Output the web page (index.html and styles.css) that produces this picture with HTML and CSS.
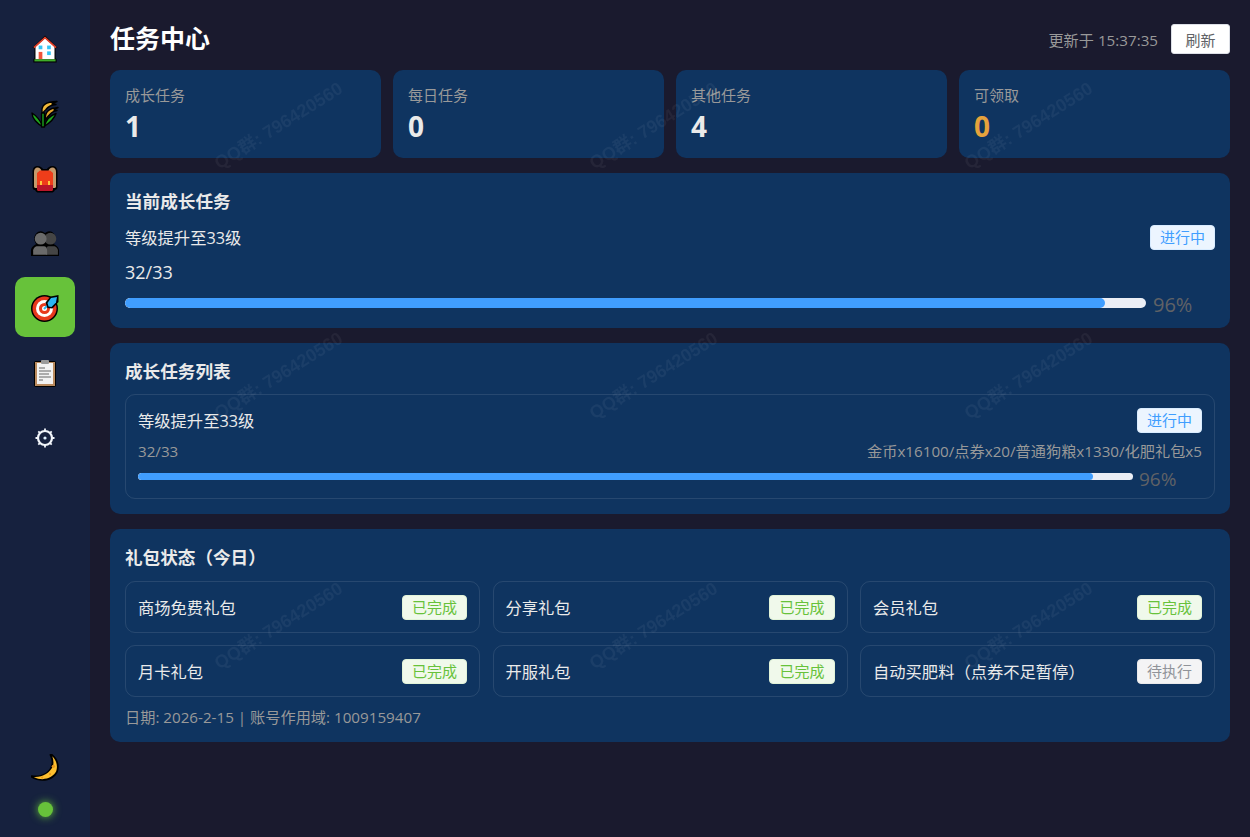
FILE: index.html
```html
<!DOCTYPE html>
<html lang="zh-CN">
<head>
    <meta charset="UTF-8">
    <meta name="viewport" content="width=device-width, initial-scale=1.0">
    <title>任务中心</title>
    <link rel="stylesheet" href="styles.css">
</head>
<body>
    <div class="app">
        <nav class="sidebar">
            <div class="nav-list">
                <a class="nav-item">
                    <svg class="nav-icon" viewBox="1 1 26 26.500">
                        <path d="M3 27v-3l1-1V13H2L14 1.500 26 13h-2v10l1 1v3z" fill="#000"/>
                        <path d="M5 24V12l9-8 9 8v12z" fill="#fff"/>
                        <path d="M3.500 13 14 3.500 24.500 13" fill="none" stroke="#e0402a" stroke-width="1.600"/>
                        <rect x="8" y="11" width="3.500" height="3.500" fill="#34c5f5"/>
                        <rect x="16" y="11" width="3.500" height="3.500" fill="#34c5f5"/>
                        <rect x="16" y="16.500" width="3.500" height="3.500" fill="#34c5f5"/>
                        <rect x="8" y="17" width="3.500" height="7" fill="#f0533a"/>
                        <rect x="4" y="24" width="20" height="2" fill="#3fae2a"/>
                    </svg>
                </a>
                <a class="nav-item">
                    <svg class="nav-icon" viewBox="0 0 28 28">
                        <g stroke="#000" stroke-width="1.400" stroke-linejoin="round">
                            <path d="M11.500 14C9 5 15 1.500 26 1.500c-3 1-4 1.500-5 2.500 1.500 0 3 0 4 .5-5 .5-8 2-10 5-2 1.500-3 3-3.500 4.500z" fill="#f3b93a"/>
                            <path d="M14.500 20C13.500 12 18 8 27 7.500c-2 1-3 1.500-4 2.500 1 0 2 0 3 .5-5 .5-8 4-11.500 9.500z" fill="#e5a52c"/>
                            <path d="M12 26.500C9 20 6 16 1 13c0 5 5 11 11 13.500z" fill="#1fa51d"/>
                            <path d="M13 26.500C17 24 23 20 25 13.500c-6 2-10 6-12 13z" fill="#1fa51d"/>
                            <path d="M10.500 27V13h3v14z" fill="#178f1a"/>
                        </g>
                    </svg>
                </a>
                <a class="nav-item">
                    <svg class="nav-icon" viewBox="0 0 28 28">
                        <path d="M1.500 22V7c0-4 2-6 5-6s5 2 5.500 3h4c.5-1 2.500-3 5.500-3s5 2 5 6v15c0 2-1 3-3.500 3H24c-1 2-2 2.500-3.500 2.500h-13C6 27.500 5 27 4 25h-.500C2.500 25 1.500 24 1.500 22z" fill="#000"/>
                        <path d="M3 22V7c0-3 1.500-4.500 3.500-4.500S10 4 10.500 5.500L7 8v15H5c-1 0-2-.5-2-1zM25 22V7c0-3-1.500-4.500-3.500-4.500S18 4 17.500 5.500L21 8v15h2c1 0 2-.5 2-1z" fill="#c49a6c"/>
                        <path d="M6 8l3-2.500h10L22 8v16c0 1-1 2-2 2H8c-1 0-2-1-2-2z" fill="#ef3d1a"/>
                        <path d="M6 20h16v4c0 1-1 2-2 2H8c-1 0-2-1-2-2z" fill="#b9162a"/>
                        <rect x="9" y="16" width="2" height="4" fill="#ffc83d"/>
                        <rect x="17" y="16" width="2" height="4" fill="#ffc83d"/>
                    </svg>
                </a>
                <a class="nav-item">
                    <svg class="nav-icon" viewBox="1 2 26 26">
                        <path d="M1 27v-5c0-3 3-5 5-6-1-1-2-3-2-5 0-4 3-7 6-7 2 0 3 1 4 2 1-1 2-2 4-2 3 0 6 3 6 7 0 2-1 4-2 5 2 1 5 3 5 6v5z" fill="#000"/>
                        <circle cx="19" cy="11" r="5.500" fill="#454545"/>
                        <circle cx="10" cy="11" r="5.500" fill="#6a6a6a"/>
                        <path d="M15 26v-4c0-2 1-4 2-4h5c2 0 4 2 4 4v4z" fill="#454545"/>
                        <path d="M3 26v-4c0-2 2-4 4-4h6c2 0 3 2 3 4v4z" fill="#6a6a6a"/>
                    </svg>
                </a>
                <a class="nav-item active">
                    <svg class="nav-icon" viewBox="0 0 28 28">
                        <circle cx="13.500" cy="14.500" r="13.500" fill="#000"/>
                        <circle cx="13.500" cy="14.500" r="12" fill="#e8391d"/>
                        <circle cx="13.500" cy="14.500" r="8.500" fill="#fff"/>
                        <circle cx="13.500" cy="14.500" r="5.500" fill="#e8391d"/>
                        <circle cx="13.500" cy="14.500" r="2.500" fill="#fff"/>
                        <path d="M13 15 20 8" stroke="#2cb5f2" stroke-width="2"/>
                        <path d="M14.500 8.500l5-6 8-1.500v7l-6 6.500-5-.500z" fill="#000"/>
                        <path d="M16.500 9l3.500-5 6-1-1 5.500-4.500 4.500-3-.500z" fill="#2cb5f2"/>
                    </svg>
                </a>
                <a class="nav-item">
                    <svg class="nav-icon" viewBox="0 0 28 28">
                        <rect x="3" y="2" width="22" height="26" rx="2" fill="#000"/>
                        <rect x="4" y="3" width="20" height="24" fill="#b98a5e"/>
                        <rect x="6" y="4" width="16" height="21" fill="#f2f2f2"/>
                        <rect x="10" y="1" width="8" height="4" rx="1" fill="#9a9a9a"/>
                        <path d="M8 9h6M8 12h12M8 15h10M8 18h12M8 21h4" stroke="#666" stroke-width="1.200"/>
                    </svg>
                </a>
                <a class="nav-item">
                    <svg class="nav-icon gear" viewBox="0 0 20 20">
                        <circle cx="10" cy="10" r="7" fill="none" stroke="#f2f6fb" stroke-width="2.200"/>
                        <circle cx="10" cy="10" r="1.600" fill="#dff1ff"/>
                        <path d="M10 .5v2.600M10 16.900v2.600M.5 10h2.600M16.900 10h2.600M3.300 3.300l1.800 1.800M14.900 14.900l1.800 1.800M3.300 16.700l1.800-1.800M14.900 5.100l1.800-1.800" stroke="#f2f6fb" stroke-width="1.800"/>
                    </svg>
                </a>
            </div>
            <div class="side-foot">
                <svg class="moon" viewBox="1 1 25 25">
                    <path d="M20 1c5 4 7 10 5 16-3 7-14 11-24 5-1-1-1-2 1-2 8 1 15-2 17-9 1-3 0-6-1-8-1-2 0-3 2-2z" fill="#000"/>
                    <path d="M20 3c4 4 5 9 3.500 13.500C21 22 12 26 3.500 21.500 11 22 18 18 20.500 12c1-3 .5-6-.5-9z" fill="#fdbf2f"/>
                    <circle cx="21" cy="12" r="1.500" fill="#ea9a1e"/>
                    <circle cx="11" cy="22" r="1" fill="#ea9a1e"/>
                    <circle cx="18" cy="19" r="1" fill="#ea9a1e"/>
                </svg>
                <span class="status-dot"></span>
            </div>
        </nav>

        <main class="main">
            <header class="page-head">
                <h1>任务中心</h1>
                <div class="head-right">
                    <span class="updated">更新于 15:37:35</span>
                    <button class="refresh-btn">刷新</button>
                </div>
            </header>

            <section class="stats">
                <div class="stat-card"><div class="stat-label">成长任务</div><div class="stat-value">1</div></div>
                <div class="stat-card"><div class="stat-label">每日任务</div><div class="stat-value">0</div></div>
                <div class="stat-card"><div class="stat-label">其他任务</div><div class="stat-value">4</div></div>
                <div class="stat-card"><div class="stat-label">可领取</div><div class="stat-value orange">0</div></div>
            </section>

            <section class="panel current">
                <h2>当前成长任务</h2>
                <div class="row-between task-top">
                    <span class="task-name">等级提升至33级</span>
                    <span class="tag tag-blue">进行中</span>
                </div>
                <div class="task-count">32/33</div>
                <div class="progress big">
                    <div class="track"><div class="fill" style="width: 96%"></div></div>
                    <span class="percent">96%</span>
                </div>
            </section>

            <section class="panel">
                <h2>成长任务列表</h2>
                <div class="task-item">
                    <div class="row-between">
                        <span class="task-name">等级提升至33级</span>
                        <span class="tag tag-blue">进行中</span>
                    </div>
                    <div class="row-between task-meta">
                        <span>32/33</span>
                        <span>金币x16100/点券x20/普通狗粮x1330/化肥礼包x5</span>
                    </div>
                    <div class="progress small">
                        <div class="track"><div class="fill" style="width: 96%"></div></div>
                        <span class="percent">96%</span>
                    </div>
                </div>
            </section>

            <section class="panel gifts">
                <h2>礼包状态（今日）</h2>
                <div class="gift-grid">
                    <div class="gift"><span>商场免费礼包</span><span class="tag tag-green">已完成</span></div>
                    <div class="gift"><span>分享礼包</span><span class="tag tag-green">已完成</span></div>
                    <div class="gift"><span>会员礼包</span><span class="tag tag-green">已完成</span></div>
                    <div class="gift"><span>月卡礼包</span><span class="tag tag-green">已完成</span></div>
                    <div class="gift"><span>开服礼包</span><span class="tag tag-green">已完成</span></div>
                    <div class="gift"><span>自动买肥料（点券不足暂停）</span><span class="tag tag-gray">待执行</span></div>
                </div>
                <div class="gift-note">日期: 2026-2-15 | 账号作用域: 1009159407</div>
            </section>
        </main>
    </div>

    <div class="watermark">
        <span>QQ群: 796420560</span><span>QQ群: 796420560</span><span>QQ群: 796420560</span>
        <span>QQ群: 796420560</span><span>QQ群: 796420560</span><span>QQ群: 796420560</span>
        <span>QQ群: 796420560</span><span>QQ群: 796420560</span><span>QQ群: 796420560</span>
    </div>
</body>
</html>
```

FILE: styles.css
```css
* {
    box-sizing: border-box;
}
html, body {
    margin: 0;
    height: 100%;
    overflow: hidden;
}
body {
    font-family: "Open Sans", "Noto Sans CJK SC", sans-serif;
    background-color: #1a1a2e;
    color: #eaeaea;
}
.app {
    display: flex;
    height: 837px;
}
.sidebar {
    width: 90px;
    flex-shrink: 0;
    background-color: #16213e;
    display: flex;
    flex-direction: column;
    justify-content: space-between;
    align-items: center;
    padding: 18px 0 20px;
}
.nav-list {
    display: flex;
    flex-direction: column;
    gap: 4.800px;
}
.nav-item {
    width: 60px;
    height: 60px;
    border-radius: 10px;
    display: flex;
    align-items: center;
    justify-content: center;
}
.nav-item.active {
    background-color: #67c23a;
}
.nav-icon {
    width: 28px;
    height: 28px;
    margin-top: 2px;
}
.nav-icon.gear {
    width: 20px;
    height: 20px;
}
.side-foot {
    display: flex;
    flex-direction: column;
    align-items: center;
    gap: 20px;
}
.moon {
    width: 28px;
    height: 28px;
}
.status-dot {
    width: 15px;
    height: 15px;
    border-radius: 50%;
    background-color: #67c23a;
    box-shadow: 0 0 8px #67c23a;
}
.main {
    flex: 1;
    padding: 19px 20px 20px;
    min-width: 0;
}
.page-head {
    display: flex;
    justify-content: space-between;
    align-items: center;
    height: 39px;
    margin-bottom: 12px;
}
h1 {
    margin: 0;
    font-size: 25px;
    line-height: 39px;
    font-weight: 700;
    color: #fff;
}
.head-right {
    display: flex;
    align-items: center;
    gap: 13px;
    padding-top: 1px;
}
.updated {
    font-size: 15.200px;
    color: #999;
}
.refresh-btn {
    width: 59px;
    height: 30px;
    padding: 0;
    font-family: inherit;
    font-size: 15px;
    color: #606266;
    background-color: #fff;
    border: 1px solid #dcdfe6;
    border-radius: 3px;
}
.stats {
    display: grid;
    grid-template-columns: repeat(4, 1fr);
    gap: 12px;
    margin-bottom: 15px;
}
.stat-card {
    height: 88px;
    padding: 15px;
    background-color: #0f3460;
    border-radius: 10px;
}
.stat-label {
    font-size: 15px;
    line-height: 21px;
    color: #999;
}
.stat-value {
    font-size: 28px;
    line-height: 40px;
    font-weight: 700;
    color: #eaeaea;
}
.stat-value.orange {
    color: #e6a23c;
}
.panel {
    background-color: #0f3460;
    border-radius: 10px;
    padding: 15px;
    margin-bottom: 15px;
}
h2 {
    margin: 0 0 11px;
    font-size: 17.600px;
    line-height: 26px;
    font-weight: 700;
    color: #eaeaea;
}
.row-between {
    display: flex;
    justify-content: space-between;
    align-items: center;
}
.task-name {
    font-size: 16.300px;
    line-height: 23px;
    margin-top: 2px;
}
.tag {
    display: inline-block;
    height: 25px;
    line-height: 23px;
    padding: 0 9px;
    font-size: 15px;
    border-radius: 4px;
    border: 1px solid;
    white-space: nowrap;
}
.tag-blue {
    color: #409eff;
    background-color: #ecf5ff;
    border-color: #d9ecff;
}
.tag-green {
    color: #67c23a;
    background-color: #f0f9eb;
    border-color: #e1f3d8;
}
.tag-gray {
    color: #909399;
    background-color: #f4f4f5;
    border-color: #e9e9eb;
}
.task-count {
    font-size: 18px;
    line-height: 27px;
    margin-top: 9px;
}
.progress {
    display: flex;
    align-items: center;
}
.track {
    flex: 1;
    background-color: #ebeef5;
    overflow: hidden;
}
.fill {
    height: 100%;
    background-color: #409eff;
}
.percent {
    color: #606266;
    white-space: nowrap;
    height: 20px;
    line-height: 24px;
}
.progress.big {
    margin-top: 7px;
}
.progress.big .track, .progress.big .fill {
    height: 10px;
    border-radius: 5px;
}
.progress.big .percent {
    width: 69px;
    padding-left: 7px;
    font-size: 20px;
}
.task-item {
    border: 1px solid rgba(255, 255, 255, 0.1);
    border-radius: 10px;
    padding: 13px 12px 11.500px 12px;
    margin-top: -1px;
}
.task-meta {
    font-size: 15.200px;
    line-height: 22px;
    color: #999;
    margin-top: 7px;
}
.progress.small {
    margin-top: 4.500px;
}
.progress.small .track, .progress.small .fill {
    height: 7px;
    border-radius: 3.500px;
}
.progress.small .percent {
    width: 69px;
    padding-left: 6px;
    font-size: 19px;
}
.gift-grid {
    display: grid;
    grid-template-columns: repeat(3, 355px);
    gap: 12px 12.500px;
}
.gift {
    height: 52px;
    display: flex;
    justify-content: space-between;
    align-items: center;
    padding: 0 12px;
    font-size: 16.300px;
    border: 1px solid rgba(255, 255, 255, 0.1);
    border-radius: 10px;
}
.gift-note {
    font-size: 15.200px;
    line-height: 20px;
    color: #999;
    margin-top: 10px;
}
.watermark {
    position: fixed;
    left: 90px;
    top: -1px;
    width: 1125px;
    height: 750px;
    pointer-events: none;
    display: grid;
    grid-template-columns: repeat(3, 375px);
    grid-auto-rows: 250px;
}
.watermark span {
    display: flex;
    align-items: center;
    justify-content: center;
    font-family: "Liberation Sans", "Noto Sans CJK SC", sans-serif;
    font-size: 18px;
    font-weight: 700;
    white-space: nowrap;
    color: rgba(255, 255, 255, 0.05);
    transform: rotate(-32deg);
}
```
